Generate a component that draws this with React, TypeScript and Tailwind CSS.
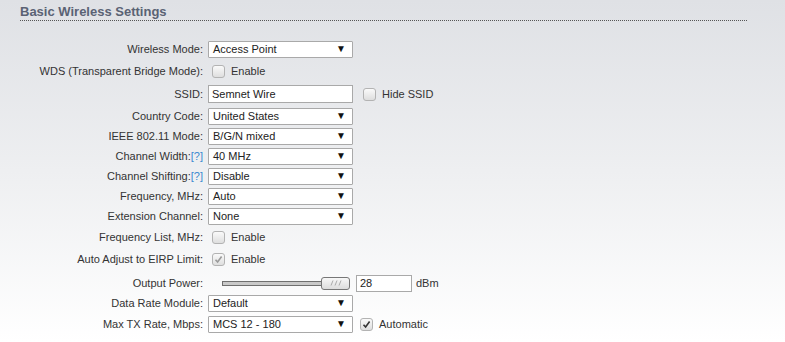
import React from "react";

const font = { fontFamily: '"Liberation Sans", Arial, sans-serif' };

function Select({ value }: { value: string }) {
    return (
        <div className="w-[145px] h-[17px] border border-[#a9a9a9] bg-white flex items-center justify-between pl-[4px] pr-[6px] rounded-[1px]">
            <span className="text-[11px] text-[#222] leading-none">{value}</span>
            <span className="text-[10px] text-[#111] leading-none">▼</span>
        </div>
    );
}

function Check({ checked = false, disabled = false }: { checked?: boolean; disabled?: boolean }) {
    return (
        <div className="w-[13px] h-[13px] rounded-[3px] border border-[#b3b3b3] bg-gradient-to-b from-[#fafafa] to-[#dedede] flex items-center justify-center">
            {checked && (
                <svg width="9" height="9" viewBox="0 0 9 9">
                    <path d="M1.5 4.8 L3.6 7 L7.6 1.6" fill="none" stroke={disabled ? "#9a9a9a" : "#333"} strokeWidth="1.6" />
                </svg>
            )}
        </div>
    );
}

function Help() {
    return <span className="text-[#3a8ad0]">[?]</span>;
}

function Row({ label, children, mt = 0 }: { label: React.ReactNode; children: React.ReactNode; mt?: number }) {
    const mts: Record<number, string> = { 0: "mt-0", 1: "mt-[1px]", 2: "mt-[2px]", 3: "mt-[3px]", 4: "mt-[4px]" };
    return (
        <div className={`flex items-center h-[20px] ${mts[mt]}`}>
            <div className="w-[203px] text-right text-[11px] text-[#333] whitespace-nowrap">{label}</div>
            <div className="ml-[5px] flex items-center">{children}</div>
        </div>
    );
}

function Enable({ label = "Enable", checked = false, disabled = false }: { label?: string; checked?: boolean; disabled?: boolean }) {
    return (
        <div className="flex items-center ml-[4px]">
            <Check checked={checked} disabled={disabled} />
            <span className="ml-[6px] text-[11px] text-[#333]">{label}</span>
        </div>
    );
}

export default function App() {
    return (
        <div style={font} className="w-[785px] h-[342px] bg-gradient-to-b from-[#dfe1e5] via-[#eeeff1] to-white overflow-hidden">
            {/* Title */}
            <div className="pt-[4px] px-[20px] w-[767px]">
                <div className="text-[13px] font-bold text-[#5a6274] leading-[15px] pb-[1px] border-b border-dotted border-[#555]">
                    Basic Wireless Settings
                </div>
            </div>

            <div className="mt-[18px]">
                <Row label="Wireless Mode:">
                    <Select value="Access Point" />
                </Row>
                <Row label="WDS (Transparent Bridge Mode):" mt={2}>
                    <Enable />
                </Row>
                <Row label="SSID:" mt={3}>
                    <div className="w-[145px] h-[18px] border border-[#a9a9a9] bg-white flex items-center pl-[3px] text-[11px] text-[#222]">
                        Semnet Wire
                    </div>
                    <div className="ml-[6px]">
                        <Enable label="Hide SSID" />
                    </div>
                </Row>
                <Row label="Country Code:" mt={2}>
                    <Select value="United States" />
                </Row>
                <Row label="IEEE 802.11 Mode:">
                    <Select value="B/G/N mixed" />
                </Row>
                <Row label={<>Channel Width:<Help /></>}>
                    <Select value="40 MHz" />
                </Row>
                <Row label={<>Channel Shifting:<Help /></>}>
                    <Select value="Disable" />
                </Row>
                <Row label="Frequency, MHz:">
                    <Select value="Auto" />
                </Row>
                <Row label="Extension Channel:">
                    <Select value="None" />
                </Row>
                <Row label="Frequency List, MHz:" mt={1}>
                    <Enable />
                </Row>
                <Row label="Auto Adjust to EIRP Limit:" mt={2}>
                    <Enable checked disabled />
                </Row>
                <Row label="Output Power:" mt={4}>
                    <div className="ml-[14px] flex items-center">
                        <div className="w-[100px] h-[5px] border border-[#6f6f6f] bg-[#c9c9c9]" />
                        <div className="-ml-[1px] w-[29px] h-[13px] rounded-[3px] border border-[#777] bg-gradient-to-b from-[#f8f8f8] to-[#dcdcdc] flex items-center justify-center">
                            <svg width="12" height="6" viewBox="0 0 12 6">
                                <path d="M1 5.5 L3 0.5 M5 5.5 L7 0.5 M9 5.5 L11 0.5" stroke="#999" strokeWidth="0.8" />
                            </svg>
                        </div>
                        <div className="ml-[6px] w-[56px] h-[17px] border border-[#a9a9a9] bg-white flex items-center pl-[3px] text-[11px] text-[#222]">
                            28
                        </div>
                        <span className="ml-[4px] text-[11px] text-[#333]">dBm</span>
                    </div>
                </Row>
                <Row label="Data Rate Module:">
                    <Select value="Default" />
                </Row>
                <Row label="Max TX Rate, Mbps:" mt={1}>
                    <Select value="MCS 12 - 180" />
                    <div className="ml-[3px]">
                        <Enable label="Automatic" checked />
                    </div>
                </Row>
            </div>
        </div>
    );
}
